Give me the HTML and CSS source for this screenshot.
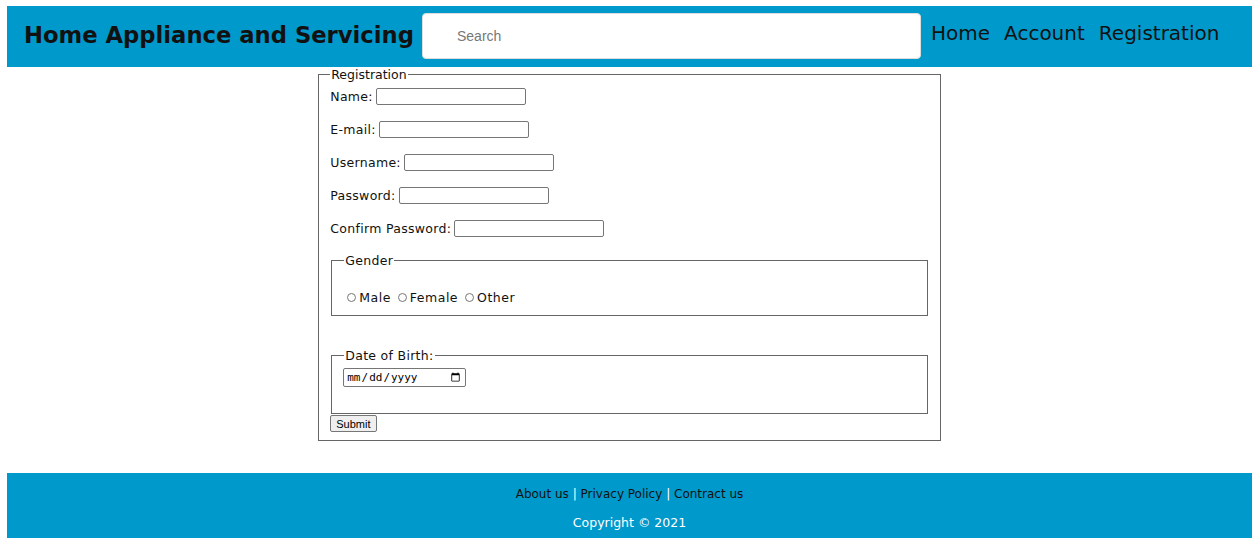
FILE: index.html
```html
<!DOCTYPE html>
<html>
<head>
<meta charset="utf-8">
<title>Home Appliance and Servicing</title>
<link rel="stylesheet" href="styles.css">
</head>
<body>
<header class="topbar">
  <h1 class="brand">Home Appliance and Servicing</h1>
  <input class="search" type="text" placeholder="Search">
  <nav class="nav">
    <a href="#">Home</a>
    <a href="#">Account</a>
    <a href="#">Registration</a>
  </nav>
</header>
<main class="main">
  <form class="reg-form">
    <fieldset class="reg">
      <legend>Registration</legend>
      <div class="row"><label>Name:</label> <input class="field" type="text"></div>
      <div class="row"><label>E-mail:</label> <input class="field" type="text"></div>
      <div class="row"><label>Username:</label> <input class="field" type="text"></div>
      <div class="row"><label>Password:</label> <input class="field" type="password"></div>
      <div class="row"><label>Confirm Password:</label> <input class="field" type="password"></div>
      <fieldset class="sub gender">
        <legend>Gender</legend>
        <div class="radios">
          <label class="radio"><input type="radio" name="g">Male</label>
          <label class="radio"><input type="radio" name="g">Female</label>
          <label class="radio"><input type="radio" name="g">Other</label>
        </div>
      </fieldset>
      <fieldset class="sub dob">
        <legend>Date of Birth:</legend>
        <input class="date" type="date">
      </fieldset>
      <button class="submit" type="button">Submit</button>
    </fieldset>
  </form>
</main>
<footer class="footer">
  <p class="links"><a href="#">About us</a> <span class="sep">|</span> <a href="#">Privacy Policy</a> <span class="sep">|</span> <a href="#">Contract us</a></p>
  <p class="copy">Copyright © 2021</p>
</footer>
</body>
</html>
```
FILE: styles.css
```css
html, body {
  background: #fff;
}
body {
  margin: 6px 6px 0 7px;
  font-family: "DejaVu Sans", "Liberation Sans", sans-serif;
  color: #111;
}
.topbar {
  background: #0099cc;
  height: 61px;
  display: flex;
  align-items: center;
  padding-left: 17px;
}
.brand {
  margin: 0 0 3px 0;
  font-size: 22.7px;
  font-weight: bold;
  color: #111;
  white-space: nowrap;
  width: 398px;
}
.search {
  width: 499px;
  height: 46px;
  box-sizing: border-box;
  border: 1px solid #ddd;
  border-radius: 4px;
  padding: 0 0 0 34px;
  font-family: "Liberation Sans", Arial, sans-serif;
  font-size: 14px;
  align-self: flex-start;
  margin-top: 7px;
}
.search::placeholder {
  color: #777;
}
.nav {
  display: flex;
  gap: 14px;
  margin-left: 10px;
  margin-top: -7px;
}
.nav a {
  color: #111;
  text-decoration: none;
  font-size: 20px;
}
.reg-form {
  margin: 0;
}
.reg {
  width: 50%;
  box-sizing: border-box;
  margin: 0 auto;
  border: 1px solid #666;
  padding: 6px 11px 8px 11px;
  font-size: 12.5px;
}
.reg > legend {
  padding: 0 1px;
}
.row {
  display: flex;
  align-items: center;
  gap: 3px;
  height: 17px;
  margin-bottom: 16px;
}
.row label {
  letter-spacing: 0.3px;
}
.field {
  width: 150px;
  height: 17px;
  box-sizing: border-box;
  border: 1px solid #767676;
  border-radius: 2px;
  padding: 0 2px;
}
.sub {
  margin: 0 1px;
  border: 1px solid #666;
  padding: 0 13px 0 12px;
}
.sub legend {
  padding: 0 1px;
  margin-left: 0;
  letter-spacing: 0.3px;
}
.gender {
  height: 63px;
  box-sizing: border-box;
  margin-bottom: 32px;
}
.radios {
  display: flex;
  align-items: center;
  gap: 4px;
  margin-top: 22px;
}
.radio {
  display: flex;
  align-items: center;
  letter-spacing: 0.5px;
}
.radio input {
  width: 9px;
  height: 9px;
  margin: 0 3px 0 3px;
}
.dob {
  height: 66px;
  box-sizing: border-box;
  margin-bottom: 1px;
}
.date {
  margin-top: 5px;
  width: 123px;
  height: 19px;
  box-sizing: border-box;
  border: 1px solid #767676;
  border-radius: 2px;
  font-family: "DejaVu Sans Mono", monospace;
  font-size: 11px;
  padding: 0 2px;
  margin-left: -1px;
}
.submit {
  font-family: "Liberation Sans", Arial, sans-serif;
  font-size: 11px;
  padding: 1px 5px;
  height: 17px;
  border: 1px solid #767676;
  border-radius: 2px;
  background: #efefef;
  color: #000;
}
.footer {
  margin-top: 32px;
  background: #0099cc;
  height: 65px;
  text-align: center;
  font-size: 12px;
  padding-top: 14px;
  box-sizing: border-box;
}
.footer p {
  margin: 0;
}
.links a {
  color: #111;
  text-decoration: none;
}
.sep {
  color: #fff;
}
.copy {
  color: #fff;
  margin-top: 14px !important;
  font-weight: normal;
  font-size: 12.5px;
}
```
